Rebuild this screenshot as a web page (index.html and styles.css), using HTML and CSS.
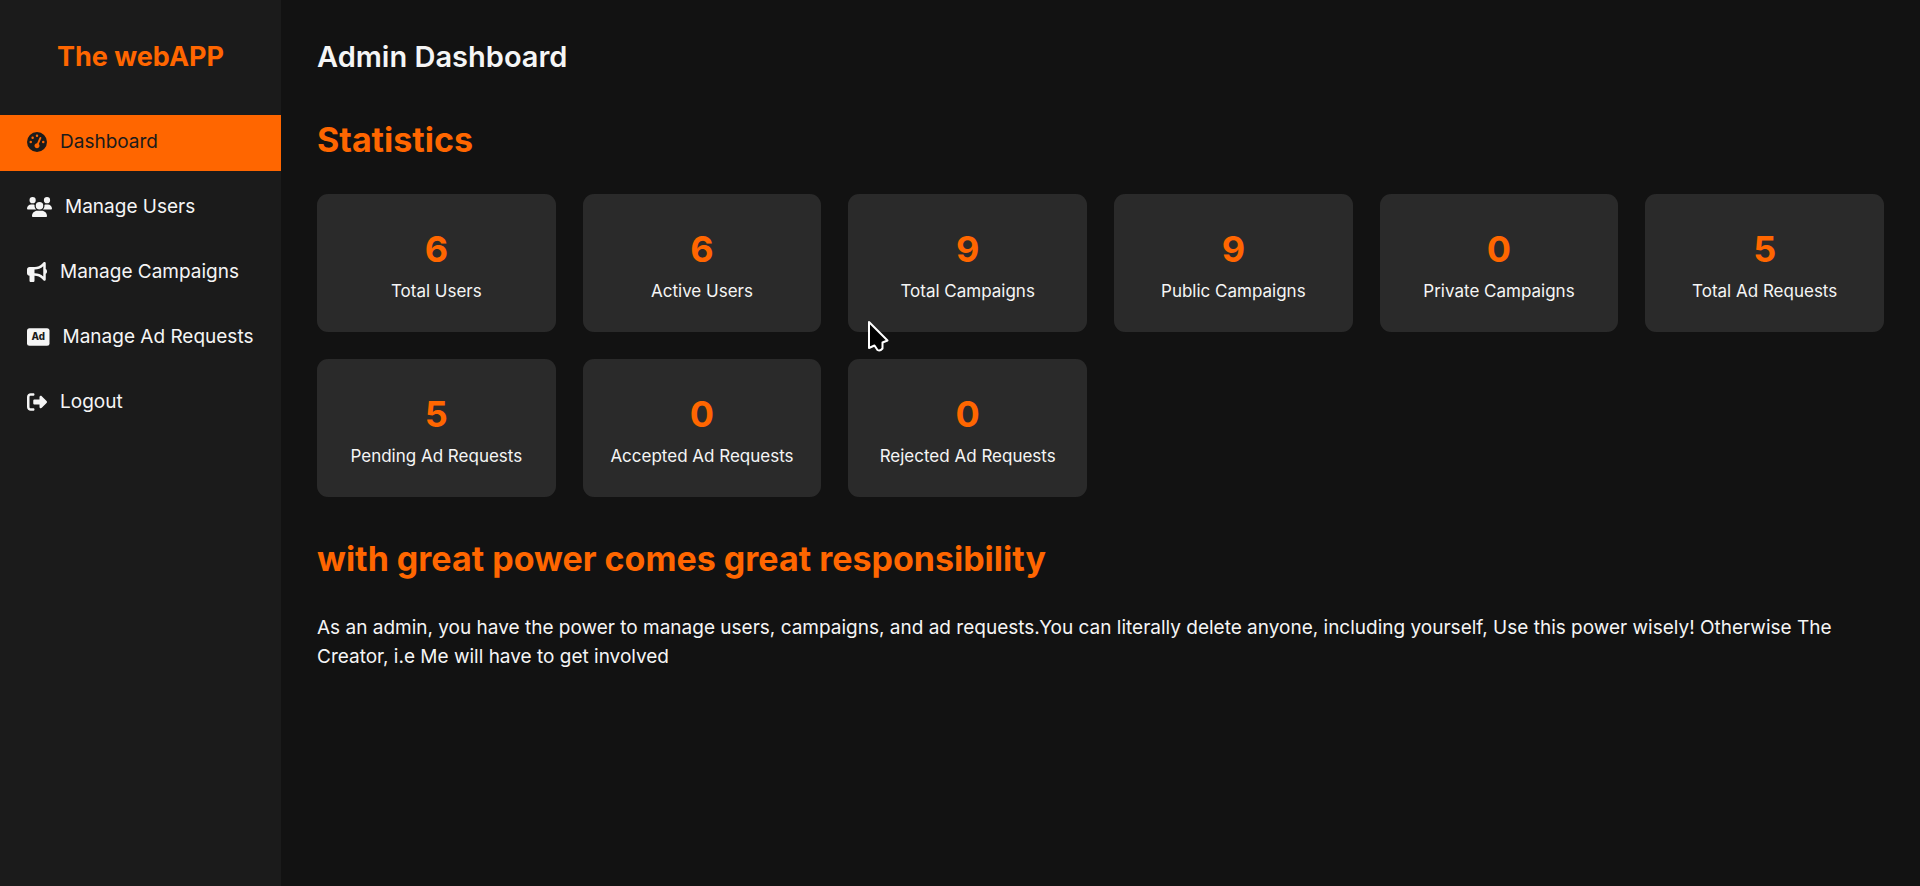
FILE: index.html
```html
<!DOCTYPE html>
<html lang="en">
<head>
<meta charset="utf-8">
<meta name="viewport" content="width=device-width, initial-scale=1">
<title>Admin Dashboard</title>
<link rel="stylesheet" href="styles.css">
</head>
<body>
<div class="layout">
  <aside class="sidebar">
    <div class="brand">The webAPP</div>
    <nav class="menu" aria-label="Main">
      <a class="menu-link active" href="#" aria-current="page">
        <svg class="icon" viewBox="0 0 512 512" aria-hidden="true"><path d="M0 256a256 256 0 1 1 512 0A256 256 0 1 1 0 256zM288 96a32 32 0 1 0 -64 0 32 32 0 1 0 64 0zM256 416c35.3 0 64-28.7 64-64c0-17.4-6.9-33.1-18.1-44.6L366 161.7c5.3-12.1-.2-26.3-12.3-31.6s-26.3 .2-31.6 12.3L257.9 288c-.6 0-1.3 0-1.9 0c-35.3 0-64 28.7-64 64s28.7 64 64 64zM176 144a32 32 0 1 0 -64 0 32 32 0 1 0 64 0zM96 288a32 32 0 1 0 0-64 32 32 0 1 0 0 64zm352-32a32 32 0 1 0 -64 0 32 32 0 1 0 64 0z"/></svg>
        <span>Dashboard</span>
      </a>
      <a class="menu-link" href="#">
        <svg class="icon" viewBox="0 0 640 512" aria-hidden="true"><path d="M144 0a80 80 0 1 1 0 160A80 80 0 1 1 144 0zM512 0a80 80 0 1 1 0 160A80 80 0 1 1 512 0zM0 298.7C0 239.8 47.8 192 106.7 192h42.7c15.9 0 31 3.5 44.6 9.7c-1.3 7.2-1.9 14.7-1.9 22.3c0 38.2 16.8 72.5 43.3 96c-.2 0-.4 0-.7 0H21.3C9.6 320 0 310.4 0 298.7zM405.3 320c-.2 0-.4 0-.7 0c26.6-23.5 43.3-57.8 43.3-96c0-7.6-.7-15-1.9-22.3c13.6-6.3 28.7-9.7 44.6-9.7h42.7C592.2 192 640 239.8 640 298.7c0 11.8-9.6 21.3-21.3 21.3H405.3zM224 224a96 96 0 1 1 192 0 96 96 0 1 1 -192 0zM128 485.3C128 411.7 187.7 352 261.3 352H378.7C452.3 352 512 411.7 512 485.3c0 14.7-11.9 26.7-26.7 26.7H154.7c-14.7 0-26.7-11.9-26.7-26.7z"/></svg>
        <span>Manage Users</span>
      </a>
      <a class="menu-link" href="#">
        <svg class="icon" viewBox="0 0 512 512" aria-hidden="true"><path d="M480 32c0-12.9-7.8-24.6-19.8-29.6s-25.7-2.2-34.9 6.9L381.7 53c-48 48-113.1 75-181 75H192 160 64c-35.3 0-64 28.7-64 64v96c0 35.3 28.7 64 64 64l0 128c0 17.7 14.3 32 32 32h64c17.7 0 32-14.3 32-32V352l8.7 0c67.9 0 133 27 181 75l43.6 43.6c9.2 9.2 22.9 11.9 34.9 6.9s19.8-16.6 19.8-29.6V300.4c18.6-8.8 32-32.5 32-60.4s-13.4-51.6-32-60.4V32zm-64 76.7V240 371.3C357.2 317.8 280.5 288 200.7 288H192V192h8.7c79.8 0 156.5-29.8 215.3-83.3z"/></svg>
        <span>Manage Campaigns</span>
      </a>
      <a class="menu-link" href="#">
        <svg class="icon" viewBox="0 0 576 512" aria-hidden="true"><rect y="32" width="576" height="448" rx="64"/><text class="icon-text" x="288" y="345" text-anchor="middle">Ad</text></svg>
        <span>Manage Ad Requests</span>
      </a>
      <a class="menu-link" href="#">
        <svg class="icon" viewBox="0 0 512 512" aria-hidden="true"><path d="M377.9 105.9L500.7 228.7c7.2 7.2 11.3 17.1 11.3 27.3s-4.1 20.1-11.3 27.3L377.9 406.1c-6.4 6.4-15 9.9-24 9.9c-18.7 0-33.9-15.2-33.9-33.9l0-62.1-128 0c-17.7 0-32-14.3-32-32l0-64c0-17.7 14.3-32 32-32l128 0 0-62.1c0-18.7 15.2-33.9 33.9-33.9c9 0 17.6 3.6 24 9.9zM160 96L96 96c-17.7 0-32 14.3-32 32l0 256c0 17.7 14.3 32 32 32l64 0c17.7 0 32 14.3 32 32s-14.3 32-32 32l-64 0c-53 0-96-43-96-96L0 128C0 75 43 32 96 32l64 0c17.7 0 32 14.3 32 32s-14.3 32-32 32z"/></svg>
        <span>Logout</span>
      </a>
    </nav>
  </aside>
  <main class="content">
    <h1 class="page-title">Admin Dashboard</h1>
    <section class="section">
      <h2 class="section-title">Statistics</h2>
      <div class="stats">
        <div class="card"><div class="value">6</div><div class="label">Total Users</div></div>
        <div class="card"><div class="value">6</div><div class="label">Active Users</div></div>
        <div class="card"><div class="value">9</div><div class="label">Total Campaigns</div></div>
        <div class="card"><div class="value">9</div><div class="label">Public Campaigns</div></div>
        <div class="card"><div class="value">0</div><div class="label">Private Campaigns</div></div>
        <div class="card"><div class="value">5</div><div class="label">Total Ad Requests</div></div>
        <div class="card"><div class="value">5</div><div class="label">Pending Ad Requests</div></div>
        <div class="card"><div class="value">0</div><div class="label">Accepted Ad Requests</div></div>
        <div class="card"><div class="value">0</div><div class="label">Rejected Ad Requests</div></div>
      </div>
    </section>
    <section class="section">
      <h2 class="section-title">with great power comes great responsibility</h2>
      <p class="note">As an admin, you have the power to manage users, campaigns, and ad requests.You can literally delete anyone, including yourself, Use this power wisely! Otherwise The Creator, i.e Me will have to get involved</p>
    </section>
  </main>
</div>
<svg class="pointer" viewBox="0 0 22 32" aria-hidden="true"><path d="M2 2V28L7.500 25.500L10.500 30Q13 31.500 15.500 28.500L15.500 22.500L20.500 20.500Z"/></svg>
</body>
</html>
```
FILE: styles.css
```css
* {
  box-sizing: border-box;
  margin: 0;
}

body {
  background: #121212;
  color: #f5f5f5;
  font-family: Inter, "Open Sans", sans-serif;
  font-size: 19px;
  line-height: 29px;
}

.layout {
  display: grid;
  grid-template-columns: 281px minmax(0, 1fr);
  min-height: 100vh;
}

.sidebar {
  background: #1b1b1b;
  padding: 36px 0;
}

.brand {
  margin-bottom: 37px;
  color: #ff6600;
  font-size: 27px;
  font-weight: 700;
  line-height: 42px;
  text-align: center;
}

.menu {
  display: flex;
  flex-direction: column;
  gap: 9px;
}

.menu-link {
  display: flex;
  align-items: center;
  gap: 13px;
  height: 56px;
  padding: 0 27px 3px;
  color: inherit;
  text-decoration: none;
  white-space: nowrap;
}

.menu-link.active {
  background: #ff6600;
  color: #1b1b1b;
}

.icon {
  flex: none;
  height: 20px;
  fill: currentColor;
}

.icon-text {
  fill: #1b1b1b;
  font-size: 250px;
  font-weight: 800;
}

.content {
  display: flex;
  flex-direction: column;
  gap: 37px;
  padding: 36px;
}

.page-title {
  font-size: 29px;
  font-weight: 600;
  line-height: 42px;
}

.section {
  display: flex;
  flex-direction: column;
  gap: 29px;
}

.section-title {
  color: #ff6600;
  font-size: 34px;
  font-weight: 700;
  line-height: 50px;
}

.stats {
  display: grid;
  grid-template-columns: repeat(auto-fill, minmax(225px, 1fr));
  gap: 27px;
}

.card {
  padding: 27px 18px;
  border-radius: 11px;
  background: #2a2a2a;
  text-align: center;
}

.value {
  color: #ff6600;
  font-size: 36px;
  font-weight: 700;
  line-height: 56px;
}

.label {
  font-size: 17px;
  line-height: 28px;
}

.pointer {
  position: absolute;
  top: 320px;
  left: 867px;
  width: 22px;
  height: 32px;
  fill: #000;
  stroke: #fff;
  stroke-width: 2;
  stroke-linejoin: round;
}
```
